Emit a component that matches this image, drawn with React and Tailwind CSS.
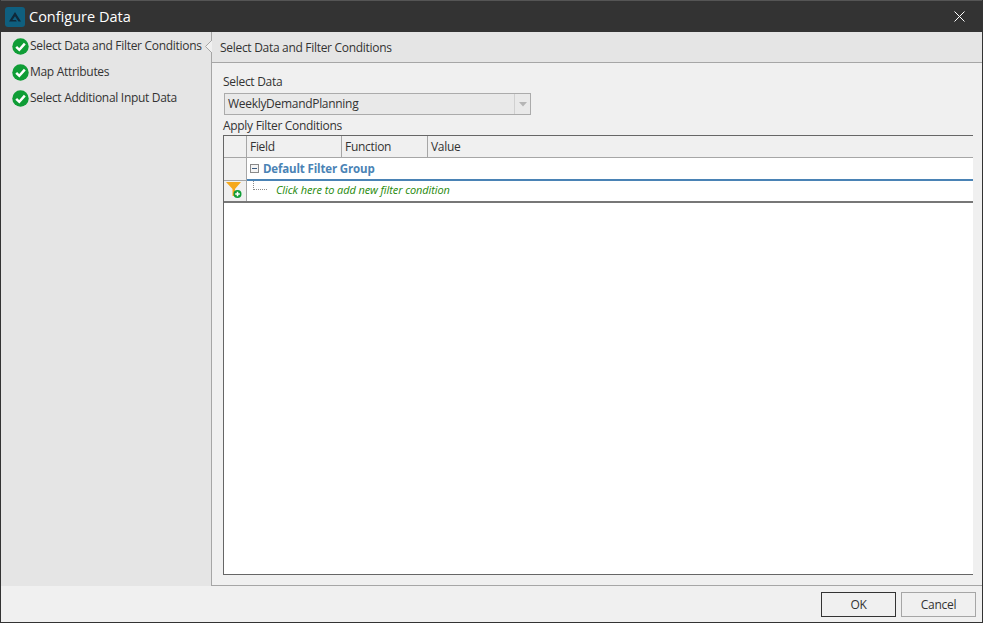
function Check() {
  return (
    <svg width="17" height="17" viewBox="0 0 17 17" className="shrink-0">
      <circle cx="8.5" cy="8.5" r="8.2" fill="#0f9d36" />
      <path d="M4.2 8.8 L7.3 11.8 L12.8 5.6" fill="none" stroke="#fff" strokeWidth="2.5" />
    </svg>
  );
}
function Step({ label }) {
  return (
    <div className="flex items-center gap-px pl-[11px] h-[26px]">
      <Check />
      <span>{label}</span>
    </div>
  );
}
export default function App() {
  return (
    <div className="w-[983px] h-[624px] overflow-hidden bg-white font-['Open_Sans','Noto_Sans',sans-serif] text-[12px] text-[#333] tracking-[-0.3px]">
      <div className="h-[623px] flex flex-col border-x border-b border-[#333] bg-[#f0f0f0]">
        <div className="h-[32px] shrink-0 bg-[#333] flex items-center pl-[4px] pr-[17px] text-white border-t border-[#555]">
          <svg width="20" height="20" viewBox="0 0 20 20" className="shrink-0">
            <rect width="20" height="20" rx="3" fill="#0f5f7f" />
            <path d="M4 14.5 L10 5 L16 14.5 L13.5 14.5 L10 9.2 L7.4 13 L11 13 L11.8 14.5 Z" fill="#10293a" />
          </svg>
          <span className="ml-[4px] text-[14.5px] tracking-normal">Configure Data</span>
          <svg width="11" height="11" viewBox="0 0 11 11" className="ml-auto">
            <path d="M0.5 0.5 L10.5 10.5 M10.5 0.5 L0.5 10.5" stroke="#fff" strokeWidth="1" />
          </svg>
        </div>
        <div className="flex flex-1 min-h-0">
          <div className="w-[210px] shrink-0 bg-[#e5e5e5] pt-[1px]">
            <Step label="Select Data and Filter Conditions" />
            <Step label="Map Attributes" />
            <Step label="Select Additional Input Data" />
          </div>
          <div className="flex-1 min-w-0 flex flex-col border-l border-b border-[#a6a6a6] relative">
            <svg width="7" height="13" viewBox="0 0 7 13" className="absolute left-[-7px] top-[8px]">
              <path d="M7 0 L0.5 6.5 L7 13" fill="#f0f0f0" stroke="#a6a6a6" />
            </svg>
            <div className="h-[31px] shrink-0 bg-[#e5e5e5] border-b border-[#a6a6a6] flex items-center pl-[8px] pt-[1px]">
              Select Data and Filter Conditions
            </div>
            <div className="flex-1 min-h-0 flex flex-col pl-[11px] pr-[9px] pt-[10px] pb-[10px]">
              <div className="h-[18px] flex items-center">Select Data</div>
              <div className="mt-[2px] ml-[1px] w-[307px] h-[22px] shrink-0 bg-[#e9e9e9] border border-[#ababab] flex items-center pl-[3px]">
                <span className="flex-1">WeeklyDemandPlanning</span>
                <div className="w-[16px] h-full border-l border-[#d0d0d0] flex items-center justify-center">
                  <svg width="8" height="5" viewBox="0 0 8 5"><path d="M0 0 H8 L4 4.5 Z" fill="#b5b5b5" /></svg>
                </div>
              </div>
              <div className="h-[20px] flex items-center pt-[2px]">Apply Filter Conditions</div>
              <div className="flex-1 min-h-0 bg-white border-l border-t border-b border-[#666] flex flex-col">
                <div className="h-[22px] shrink-0 flex bg-[#f0f0f0] border-b border-[#a6a6a6]">
                  <div className="w-[23px] border-r border-[#a6a6a6]" />
                  <div className="w-[95px] border-r border-[#a6a6a6] pl-[3px] flex items-center">Field</div>
                  <div className="w-[86px] border-r border-[#a6a6a6] pl-[3px] flex items-center">Function</div>
                  <div className="flex-1 pl-[3px] flex items-center">Value</div>
                </div>
                <div className="h-[23px] shrink-0 flex">
                  <div className="w-[23px] bg-[#f0f0f0] border-r border-b border-[#a6a6a6]" />
                  <div className="flex-1 flex items-center border-b-2 border-[#4a83b5] pl-[3px]">
                    <div className="w-[9px] h-[9px] border border-[#8a8a8a] bg-[#f4f4f4] flex items-center justify-center">
                      <div className="w-[5px] h-px bg-[#3a5a80]" />
                    </div>
                    <span className="ml-[4px] font-bold text-[#4a83b5] text-[11.5px] tracking-[-0.15px]">Default Filter Group</span>
                  </div>
                </div>
                <div className="h-[22px] shrink-0 flex border-b-2 border-[#777]">
                  <div className="w-[23px] bg-[#f0f0f0] border-r border-[#a6a6a6] flex items-center justify-center pr-[2px] pb-[2px]">
                    <svg width="18" height="18" viewBox="0 0 18 18">
                      <path d="M1 1 H16 L10 8 V15 H7.5 V8 Z" fill="#f5a81c" />
                      <circle cx="12.5" cy="13" r="4" fill="#0f9d36" />
                      <path d="M10.2 13 H14.8 M12.5 10.7 V15.3" stroke="#fff" strokeWidth="1.5" />
                    </svg>
                  </div>
                  <div className="flex-1 flex items-center relative pl-[29px] pb-[1px] tracking-[-0.1px]">
                    <div className="absolute left-[6px] top-0 w-[14px] h-[9px] border-l border-b border-dotted border-[#8a8a8a]" />
                    <span className="italic text-[#1f8a0b] text-[11px]">Click here to add new filter condition</span>
                  </div>
                </div>
                <div className="flex-1" />
              </div>
            </div>
          </div>
        </div>
        <div className="h-[36px] shrink-0 flex items-center justify-end gap-[5px] pr-[6px] pt-[1px]">
          <button className="w-[75px] h-[25px] border border-[#333] bg-[#f0f0f0] text-[#333]">OK</button>
          <button className="w-[75px] h-[25px] border border-[#a6a6a6] bg-[#f0f0f0] text-[#333]">Cancel</button>
        </div>
      </div>
    </div>
  );
}
